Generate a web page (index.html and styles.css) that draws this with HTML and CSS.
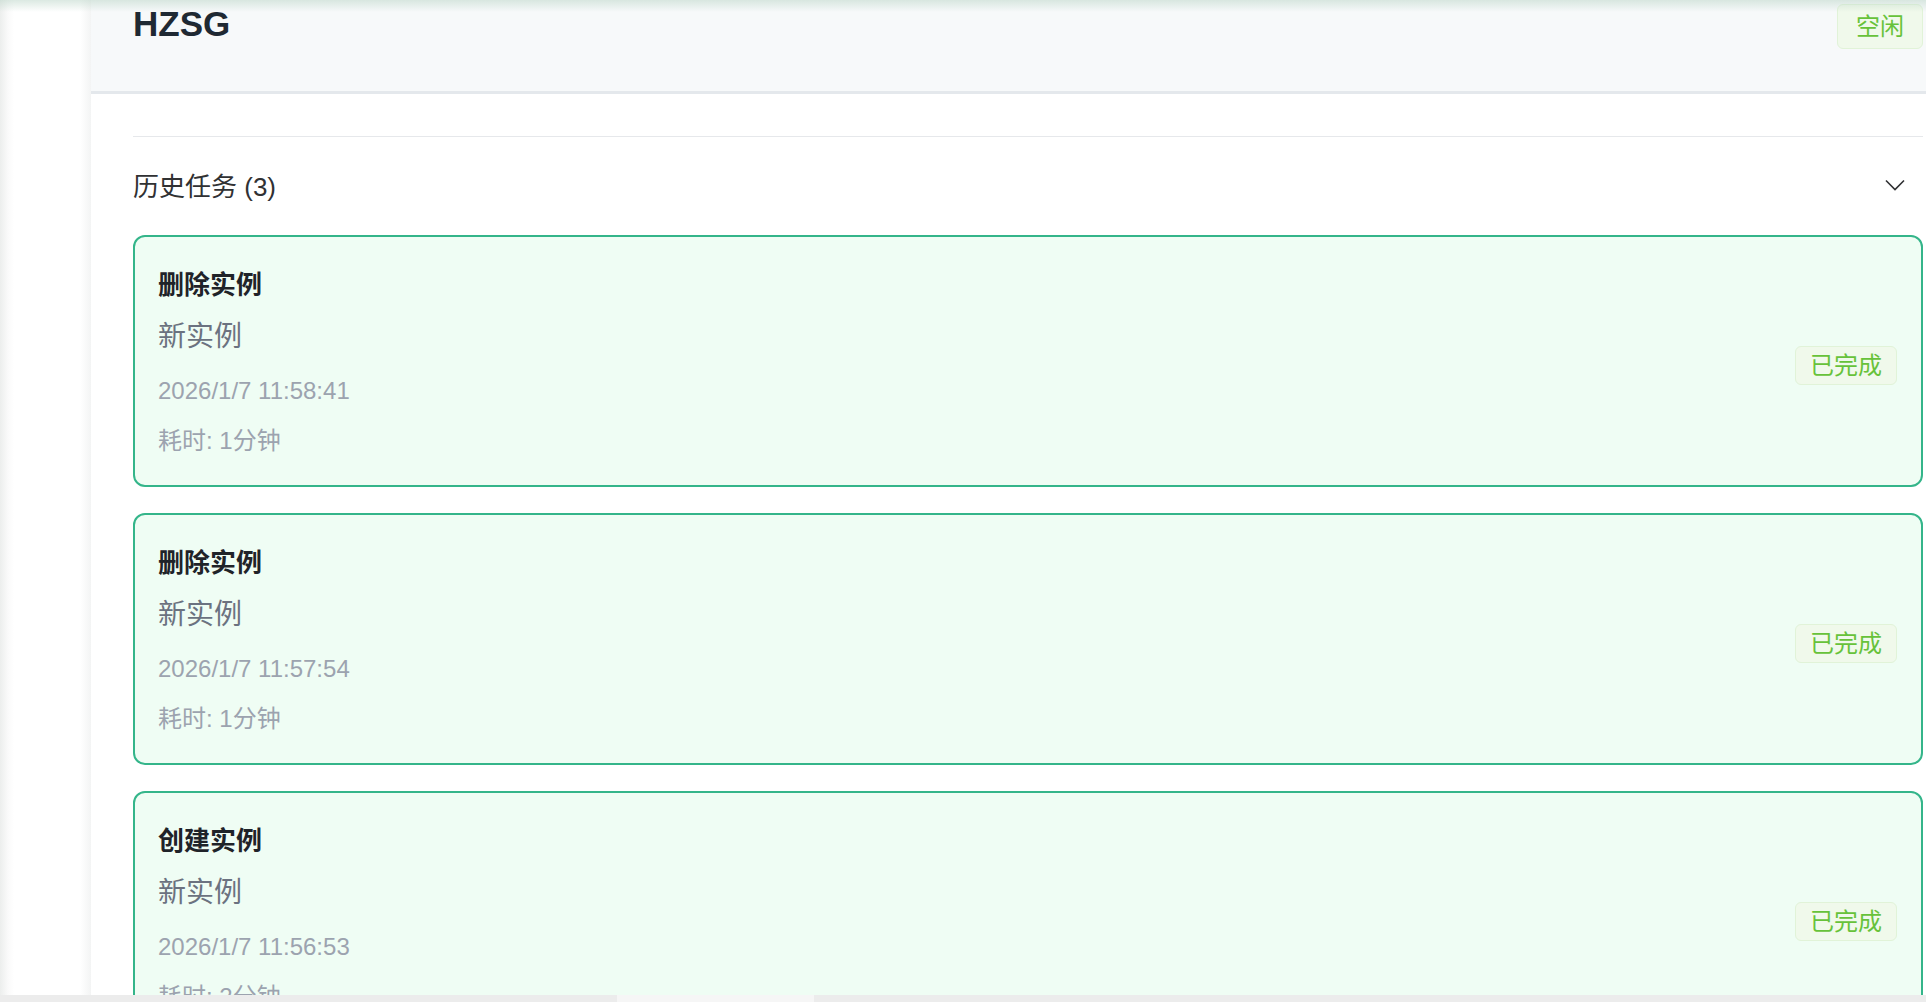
FILE: index.html
```html
<!DOCTYPE html>
<html lang="zh-CN">
<head>
  <meta charset="UTF-8">
  <meta name="viewport" content="width=device-width, initial-scale=1.0">
  <title>HZSG</title>
  <link rel="stylesheet" href="styles.css">
</head>
<body>
  <div class="app">
    <aside class="sidebar"></aside>

    <main class="main">
      <header class="header">
        <h1 class="title">HZSG</h1>
        <span class="tag tag-idle">空闲</span>
      </header>

      <section class="content">
        <div class="history">
          <div class="history-head">
            <span class="history-title">历史任务 (3)</span>
            <svg class="chevron" width="20" height="12" viewBox="0 0 20 12">
              <path d="M1 1.5 L10 10.5 L19 1.5" fill="none" stroke="#303133" stroke-width="1.6" stroke-linejoin="miter"/>
            </svg>
          </div>

          <div class="task-list">
            <div class="task">
              <div class="task-info">
                <div class="task-name">删除实例</div>
                <div class="task-target">新实例</div>
                <div class="task-meta task-time">2026/1/7 11:58:41</div>
                <div class="task-meta">耗时: 1分钟</div>
              </div>
              <span class="tag tag-done">已完成</span>
            </div>

            <div class="task">
              <div class="task-info">
                <div class="task-name">删除实例</div>
                <div class="task-target">新实例</div>
                <div class="task-meta task-time">2026/1/7 11:57:54</div>
                <div class="task-meta">耗时: 1分钟</div>
              </div>
              <span class="tag tag-done">已完成</span>
            </div>

            <div class="task">
              <div class="task-info">
                <div class="task-name">创建实例</div>
                <div class="task-target">新实例</div>
                <div class="task-meta task-time">2026/1/7 11:56:53</div>
                <div class="task-meta">耗时: 2分钟</div>
              </div>
              <span class="tag tag-done">已完成</span>
            </div>
          </div>
        </div>
      </section>
    </main>
  </div>

  <div class="hscroll"><div class="hscroll-thumb"></div></div>
</body>
</html>
```

FILE: styles.css
```css
html, body {
  margin: 0;
  height: 100%;
  overflow: hidden;
}

body {
  font-family: "Liberation Sans", Arial, "Noto Sans CJK SC", sans-serif;
  color: #303133;
  background: #fff;
}

.app {
  position: relative;
  display: flex;
  height: 1002px;
}

.app::before {
  content: "";
  position: absolute;
  left: 0;
  right: 0;
  top: 0;
  height: 12px;
  background: linear-gradient(to bottom, rgba(190, 215, 202, 0.55), rgba(220, 235, 228, 0));
  pointer-events: none;
}

.sidebar {
  width: 91px;
  flex-shrink: 0;
  background: linear-gradient(to right, #eceeed 0, #fafafa 8px, #fff 14px, #fff 80px, #f3f4f4 91px);
}

.main {
  flex: 1;
  min-width: 0;
}

.header {
  height: 94px;
  padding: 4px 3px 0 42px;
  box-sizing: border-box;
  background: #f7f9fa;
  border-bottom: 3px solid #e4e8ec;
  display: flex;
  justify-content: space-between;
  align-items: flex-start;
}

.title {
  margin: 0;
  font-size: 35px;
  line-height: 40px;
  font-weight: bold;
  color: #1f2933;
}

.tag {
  display: inline-block;
  border: 1px solid #e1f3d8;
  background: #f0f9eb;
  color: #67c23a;
  font-size: 24px;
  border-radius: 6px;
  white-space: nowrap;
}

.tag-idle {
  height: 45px;
  line-height: 43px;
  padding: 0 18px;
  box-sizing: border-box;
}

.tag-done {
  height: 39px;
  line-height: 37px;
  padding: 0 14px;
  box-sizing: border-box;
  margin-top: 5px;
  flex-shrink: 0;
}

.content {
  padding: 42px 3px 0 42px;
}

.history {
  border-top: 1px solid #e6e8eb;
}

.history-head {
  height: 94px;
  display: flex;
  align-items: center;
  justify-content: space-between;
  padding-right: 18px;
}

.history-title {
  font-size: 26px;
  color: #303133;
}

.chevron {
  display: block;
  margin-top: 2px;
}

.task-list {
  padding-top: 4px;
  display: flex;
  flex-direction: column;
  gap: 26px;
}

.task {
  display: flex;
  align-items: center;
  justify-content: space-between;
  padding: 30px 24px 27px 23px;
  border: 2px solid #34b58a;
  border-radius: 12px;
  background: #effdf4;
}

.task-name {
  font-size: 26px;
  line-height: 36px;
  font-weight: bold;
  color: #1f2329;
}

.task-target {
  margin-top: 14px;
  font-size: 28px;
  line-height: 40px;
  color: #6b7280;
}

.task-meta {
  margin-top: 16px;
  font-size: 24px;
  line-height: 34px;
  color: #9ca3af;
}

.task-time {
  margin-top: 17px;
}

.hscroll {
  position: fixed;
  left: 0;
  right: 0;
  bottom: 0;
  height: 7px;
  background: #ececec;
}

.hscroll-thumb {
  margin-left: 617px;
  width: 197px;
  height: 100%;
  background: #f6f6f6;
}
```
